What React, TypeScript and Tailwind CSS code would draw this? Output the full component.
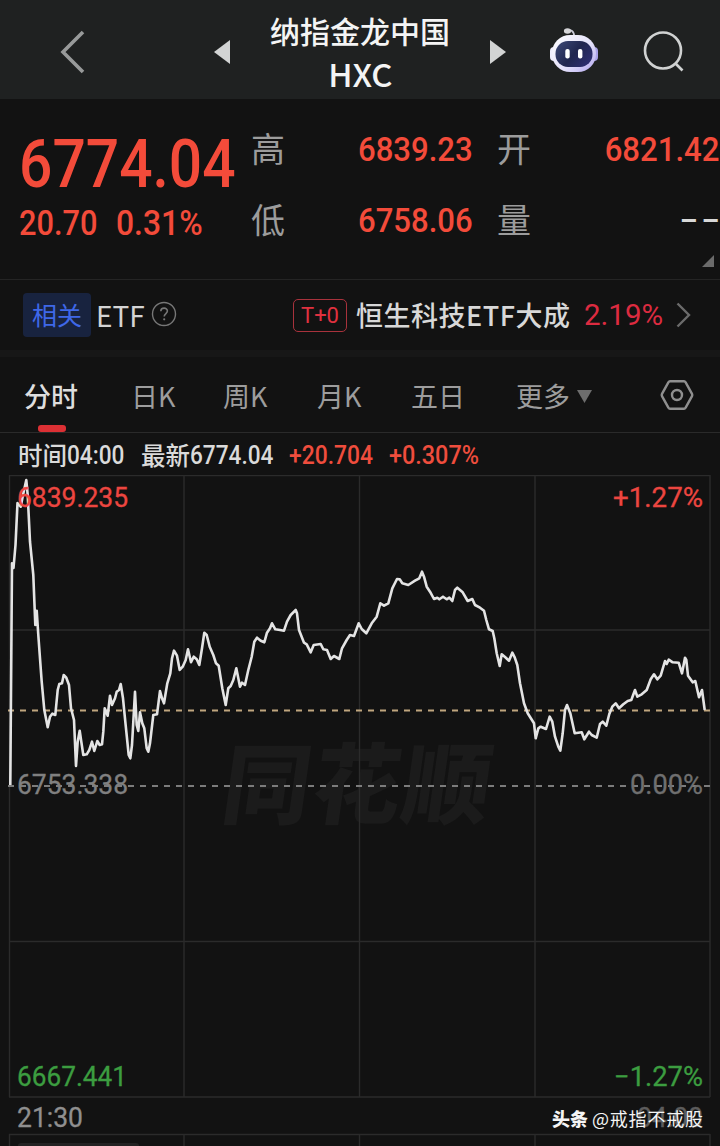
import type { ReactNode } from 'react'
import clsx from 'clsx'

const GRID_X = [9.5, 184, 359.5, 535, 710]

const PRICE_LINE =
  '10.3,785 12,563.3 13.5,568 15.5,545 17.5,503 20.7,506.7 23,495 26.3,480 27.7,495 30,541.7 33.3,575 35.3,625 36.7,610.7 38.3,635 41.7,681.7 44.3,710 47.7,727.3 50,716.7 52.3,713.7 55.3,715 57.7,690 59.3,684 62,683.3 63.7,675 66.3,677.7 69,685 71,708.3 74,720 76,766 77.7,741.7 79.7,730.7 81.3,741.7 83.3,755 86.7,754.3 89.3,750 92,741.7 94.3,751 97.3,741 99.7,745 102,744.3 103.3,731.7 104.7,708.3 107.7,715.7 110,695.7 112,705 115,698.3 116.7,691.7 119,690 120.7,684 123,698.3 125.3,721.7 128.7,755 130.3,758.3 132,745 135,691.7 136.7,725 138.3,731 140,712.3 142.3,723.3 144.3,728.3 146.7,748.3 148.3,751.7 150,743.3 153.3,715 157,714.3 160,691 162,698.3 164,703.3 167.3,683.3 170.3,673.3 172,658.3 174,650.7 177,655.7 179.7,670 182.7,666.7 185.7,660 188,649.3 191,662.3 193.7,656.7 196.7,659.3 199.3,665 202,648.3 204.3,632.7 206.7,635 209.7,646.7 213.3,655 216,663.3 218.7,665.7 222.3,688.3 225.7,705 228.3,688.3 230.7,686 233.3,680 236.3,668.3 240,686.7 242,682.7 245,685 248.3,670 251.7,656.7 254.3,641.7 257,637.7 260.7,640.7 264.3,642.3 267,632.7 270,628.3 272,623.3 275.3,629.3 280,630 284,630.7 287,621.7 290.7,615 295.7,610 297,613.3 299,630 304,642.7 306.7,644.3 310.7,652.3 313.7,645 320.7,644 323.3,649.3 327,650 330.7,659 334,656 339.3,659 342,648.3 346.7,640 350,635 354,636 358.7,623.3 361.7,629 366.3,633.3 371.7,623.3 376.7,616.7 380.3,603.3 384,605.7 388.3,603.3 392.3,588.3 397,579 399.7,579.3 402.3,583.3 408.3,585 415,580.7 419.3,578.3 422,571.7 424,576.7 426.7,586.7 430,591.7 434,599 437.3,597.7 439.3,599.3 443,596.7 446.7,599.3 449.3,597.7 452.3,601 455,590 457.3,587.7 462.7,592.3 467.7,601 472.3,599 475,605 480,607.7 484,610.7 486.3,620 489,629.3 492.7,631 494.3,638.3 496.7,653.3 499.7,666 501.7,654.3 505.3,657.3 509,660.7 512.3,652.7 514.7,657.3 517.3,665 520,683.3 524,703.3 527.7,713.3 534,723.3 535.7,738.3 538.3,728.3 540.7,726.7 546,729 549.7,716.7 552.3,721.7 555,736.7 558.3,746.7 560.3,750.7 562.7,733.3 565,710 567,705 570.3,713.3 574.7,733.3 581.7,732.3 584.3,739.3 589,731.7 591.7,735 596.7,737.7 600,724 602.7,721.7 606.3,725.7 609.3,714 612.3,706.7 615.7,703.3 619,708.3 623.3,704.3 627.7,701 631.3,700 635,690 637.3,696.7 641.7,694.3 646.7,690 650.7,679.3 654,674.3 657.3,679.3 660.7,675.7 665,661 666.7,664 668.7,659.7 672.7,662.3 678.7,662.7 682,673.3 685,657.7 686.3,660 688,675.7 692.7,682.3 695.3,681 699,697.3 702,690 704.7,710'

function Num({ className, children }: { className?: string; children: ReactNode }) {
  return (
    <span className={clsx("inline-block whitespace-nowrap font-['Roboto',sans-serif] font-medium", className)}>
      {children}
    </span>
  )
}

function RobotIcon() {
  return (
    <svg width="50" height="46" viewBox="0 0 50 46" fill="none">
      <defs>
        <linearGradient id="shell" x1="8" y1="8" x2="42" y2="44" gradientUnits="userSpaceOnUse">
          <stop stopColor="#fbfbff" />
          <stop offset="0.6" stopColor="#e3e0fa" />
          <stop offset="1" stopColor="#b9aff0" />
        </linearGradient>
        <linearGradient id="visor" x1="10" y1="14" x2="40" y2="40" gradientUnits="userSpaceOnUse">
          <stop stopColor="#3b4674" />
          <stop offset="0.5" stopColor="#20264f" />
          <stop offset="1" stopColor="#2f2f74" />
        </linearGradient>
      </defs>
      <path d="M18 3.500c4-1 7 .5 7.200 6" stroke="#c9c9d6" strokeWidth="1.800" />
      <ellipse cx="18.500" cy="4" rx="3.600" ry="2.800" fill="#d5d5d8" />
      <rect x="1" y="20" width="8" height="14" rx="4" fill="#eeedfc" />
      <rect x="41" y="20" width="8" height="14" rx="4" fill="#aaa2e8" />
      <rect x="3" y="8" width="44" height="37" rx="18" fill="url(#shell)" />
      <rect x="6.500" y="14" width="37" height="26" rx="12.500" fill="url(#visor)" />
      <rect x="16.300" y="22" width="4.400" height="9.500" rx="2" fill="#fff" />
      <rect x="29" y="22" width="4.400" height="9.500" rx="2" fill="#fff" />
    </svg>
  )
}

function Header() {
  return (
    <header className="flex h-[99px] items-center bg-[#1f2121] pl-[59px]">
      <svg width="28" height="44" viewBox="0 0 28 44" fill="none" className="mt-1">
        <path d="M24 2 4 22l20 20" stroke="#989a9a" strokeWidth="3.600" />
      </svg>
      <svg width="16" height="24" viewBox="0 0 16 24" className="mt-1 ml-[127px]">
        <path d="M16 0v24L0 12z" fill="#d2d4d4" />
      </svg>
      <h1 className="ml-10 w-[180px] pt-[5px] text-center text-[30px] leading-[44px] font-medium whitespace-nowrap text-[#f4f4f4]">
        纳指金龙中国
        <br />
        <span className="inline-block origin-center scale-x-[1.06] text-[31px]">HXC</span>
      </h1>
      <svg width="16" height="24" viewBox="0 0 16 24" className="mt-1 ml-10">
        <path d="M0 0v24l16-12z" fill="#d2d4d4" />
      </svg>
      <div className="ml-[43px]">
        <RobotIcon />
      </div>
      <svg width="42" height="42" viewBox="0 0 42 42" fill="none" className="mt-1 ml-[44px]">
        <circle cx="20" cy="19.500" r="18" stroke="#d0d2d2" strokeWidth="2.600" />
        <path d="m32 32 7.500 7.500" stroke="#d0d2d2" strokeWidth="2.600" />
      </svg>
    </header>
  )
}

function Quote() {
  return (
    <section className="flex h-[181px] border-b border-[#242424] text-[#f34b3a]">
      <div className="w-[251px] pt-[29px] pl-[19px]">
        <Num className="block h-[74px] origin-left scale-x-[0.89] text-[66px] leading-[74px]">6774.04</Num>
        <div className="flex h-[44px] text-[35px] leading-[44px]">
          <Num className="w-[97px] origin-left scale-x-[0.88]">20.70</Num>
          <Num className="origin-left scale-x-[0.91]">0.31%</Num>
        </div>
      </div>
      <div className="flex flex-1 flex-col pt-[13px]">
        {[
          ['高', '6839.23', '开', '6821.42'],
          ['低', '6758.06', '量', '--'],
        ].map(([a, x, b, y]) => (
          <div key={a} className="flex h-[71px] items-center text-[34px]">
            <span className="w-[107px] text-[#9c9c9c]">{a}</span>
            <span className="w-[139px]">
              <Num className="origin-left scale-x-[0.915]">{x}</Num>
            </span>
            <span className="w-[64px] text-[#9c9c9c]">{b}</span>
            <span className="w-[158px] text-right">
              {y === '--' ? (
                <Num className="origin-right translate-x-[4px] translate-y-[-1px] scale-x-[1.6] tracking-[2px] text-[#d8d8d8]">--</Num>
              ) : (
                <Num className="origin-right scale-x-[0.915]">{y}</Num>
              )}
            </span>
          </div>
        ))}
        <svg width="12" height="12" viewBox="0 0 12 12" className="mt-px ml-[451px]">
          <path d="M12 0v12H0z" fill="#6b6b6b" />
        </svg>
      </div>
    </section>
  )
}

function RelatedEtf() {
  return (
    <section className="flex h-[70px] items-center pl-[23px]">
      <span className="flex h-[44px] w-[68px] items-center justify-center rounded-[4px] bg-[#18233f] text-[25px] text-[#3f68e8]">
        相关
      </span>
      <span className="ml-[5px] w-[49px] text-[28px]  text-[#d4d4d4]">ETF</span>
      <svg width="26" height="26" viewBox="0 0 26 26" fill="none" className="mt-[-2px] ml-[6px]">
        <circle cx="13" cy="13" r="11.500" stroke="#777" strokeWidth="1.400" />
        <path d="M9.800 10.300c0-4.200 6.600-4.200 6.600-.2 0 2.400-3.200 2.500-3.200 5.300" stroke="#777" strokeWidth="1.600" />
        <circle cx="13.200" cy="18.300" r="1.100" fill="#777" />
      </svg>
      <span className="ml-[116px] flex h-[33px] w-[54px] items-center justify-center rounded-[5px] border border-[#a8323c] text-[22px] text-[#e0313f]">
        <span className="font-['Roboto',sans-serif]">T+0</span>
      </span>
      <span className="ml-[9px] w-[228px] text-[27px] font-medium tracking-[0.5px] whitespace-nowrap text-[#d8d8d8]">
        恒生科技ETF大成
      </span>
      <span className="w-[92px] font-['Roboto',sans-serif] text-[29.500px] text-[#dc2b40]">2.19%</span>
      <svg width="15" height="26" viewBox="0 0 15 26" fill="none">
        <path d="m1.500 1.500 11.500 11.500-11.500 11.500" stroke="#6b6b6b" strokeWidth="2.400" />
      </svg>
    </section>
  )
}

function Tabs() {
  return (
    <nav className="flex h-[76px] items-center border-b border-[#2a2a2a] pt-[3px] pl-[24px] text-[27px] whitespace-nowrap text-[#9d9d9d]">
      <div className="relative flex h-full w-[107px] items-center font-medium text-[#dedede]">
        分时
        <span className="absolute bottom-0 left-[14px] h-[7px] w-[28px] rounded-[3px] bg-[#dc3034]" />
      </div>
      <span className="w-[92px]">日K</span>
      <span className="w-[94px]">周K</span>
      <span className="w-[94px]">月K</span>
      <span className="w-[105px]">五日</span>
      <span>更多</span>
      <svg width="15" height="13" viewBox="0 0 15 13" className="ml-[7px]">
        <path d="M0 0h15L7.500 13z" fill="#6d6d6d" />
      </svg>
      <svg width="34" height="32" viewBox="0 0 34 32" fill="none" className="mt-[-3px] ml-[68px]">
        <path d="M10 2.200h14q1 0 1.500 1L32 14.800q.6 1.200 0 2.400L25.500 28.800q-.5 1-1.500 1H10q-1 0-1.500-1L2 17.200q-.6-1.200 0-2.400L8.500 3.200q.5-1 1.500-1z" stroke="#8f8f8f" strokeWidth="2.400" />
        <circle cx="17" cy="16" r="5" stroke="#8f8f8f" strokeWidth="2.400" />
      </svg>
    </nav>
  )
}

function InfoRow() {
  return (
    <div className="flex h-[42px] items-center pt-[2px] pl-[18px] text-[24.500px] font-medium whitespace-nowrap text-[#dadada]">
      <span className="flex w-[123px] items-center">
        时间<Num className="origin-left scale-x-[0.87] text-[26px]">04:00</Num>
      </span>
      <span className="flex w-[148px] items-center">
        最新<Num className="origin-left scale-x-[0.87] text-[26px]">6774.04</Num>
      </span>
      <span className="w-[100px] text-[#ef4d3d]">
        <Num className="origin-left scale-x-[0.88] text-[26px]">+20.704</Num>
      </span>
      <Num className="origin-left scale-x-[0.9] text-[26px] text-[#ef4d3d]">+0.307%</Num>
    </div>
  )
}

function AxisLabel({ x, y, width, fill, children }: { x: number; y: number; width: number; fill: string; children: string }) {
  return (
    <text
      x={x}
      y={y}
      fill={fill}
      stroke={fill}
      strokeWidth="0.3"
      textLength={width}
      lengthAdjust="spacingAndGlyphs"
      className="font-['Roboto',sans-serif] text-[27px]"
    >
      {children}
    </text>
  )
}

function Chart() {
  return (
    <svg width="720" height="671" viewBox="0 475 720 671" fill="none" className="block">
      <text
        x="0"
        y="0"
        transform="translate(219 817) skewX(-8)"
        textLength="268"
        className="font-['Noto_Sans_CJK_SC',sans-serif] text-[88px] font-black"
        fill="#1b1b1b"
      >
        同花顺
      </text>
      <g stroke="#2b2b2b" strokeWidth="1.400">
        <path d="M9 475.500h701M9 630h701M9 941.500h701M9 1097h701M9 1134.500h701" />
        {GRID_X.map((x) => (
          <path key={x} d={`M${x} 475v622M${x} 1134v12`} />
        ))}
      </g>
      <rect x="18" y="1143" width="121" height="8" rx="3" fill="#222" />
      <path d="M8 710.500h703" stroke="#c0a67e" strokeWidth="2" strokeDasharray="6 6" />
      <path d="M8 786h703" stroke="#7c7c7c" strokeWidth="2" strokeDasharray="6 6" />
      <polyline points={PRICE_LINE} stroke="#e4e4e4" strokeWidth="2.600" strokeLinejoin="round" />
      <AxisLabel x={17} y={506.5} width={111} fill="#ed4640">6839.235</AxisLabel>
      <AxisLabel x={613} y={506.5} width={90} fill="#ed4640">+1.27%</AxisLabel>
      <AxisLabel x={17} y={793.5} width={111} fill="#808080">6753.338</AxisLabel>
      <AxisLabel x={630} y={793.5} width={73} fill="#6f6f6f">0.00%</AxisLabel>
      <AxisLabel x={17} y={1086} width={110} fill="#3c9d40">6667.441</AxisLabel>
      <AxisLabel x={614} y={1086} width={89} fill="#3c9d40">−1.27%</AxisLabel>
      <AxisLabel x={17} y={1127} width={66} fill="#8f8f8f">21:30</AxisLabel>
      <AxisLabel x={637} y={1127} width={66} fill="#5c5c5c">04:00</AxisLabel>
      <g className="font-['Noto_Sans_CJK_SC',sans-serif]" fill="#f4f4f4">
        <text x="552" y="1126" textLength="36" className="text-[18px] font-black">头条</text>
        <text x="592" y="1126" textLength="111" className="text-[18px]">@戒指不戒股</text>
      </g>
    </svg>
  )
}

export default function App() {
  return (
    <div className="h-[1146px] w-[720px] overflow-hidden bg-[#121212] font-['Noto_Sans_CJK_SC',sans-serif]">
      <Header />
      <Quote />
      <RelatedEtf />
      <div className="h-[7px] bg-[#171717]" />
      <Tabs />
      <InfoRow />
      <Chart />
    </div>
  )
}
